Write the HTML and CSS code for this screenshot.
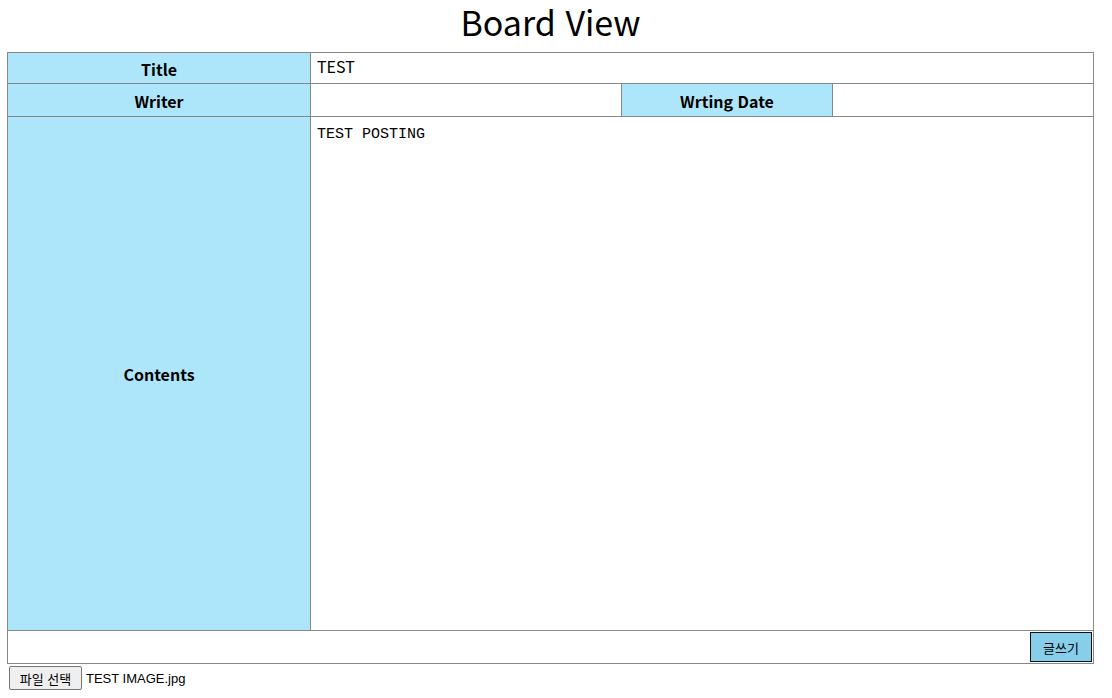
FILE: index.html
```html
<!DOCTYPE html>
<html lang="ko">
<head>
<meta charset="utf-8">
<title>Board View</title>
<link rel="stylesheet" href="styles.css">
</head>
<body>
<h1 class="page-title">Board View</h1>
<div class="board">
  <div class="cell label">Title</div>
  <div class="cell value span3 title-value">TEST</div>

  <div class="cell label">Writer</div>
  <div class="cell value"></div>
  <div class="cell label">Wrting Date</div>
  <div class="cell value"></div>

  <div class="cell label contents-label">Contents</div>
  <div class="cell value span3 contents-value">TEST POSTING</div>

  <div class="cell span4 actions"><button class="write-btn" type="button">글쓰기</button></div>
</div>
<div class="file-row">
  <button class="file-btn" type="button">파일 선택</button>
  <span class="file-name">TEST IMAGE.jpg</span>
</div>
</body>
</html>
```

FILE: styles.css
```css
html, body {
  margin: 0;
  padding: 0;
  background: #fff;
}
body {
  padding: 0 0 0 7px;
  font-family: "Noto Sans CJK KR", "Noto Sans", sans-serif;
  color: #000;
}
.page-title {
  margin: 0;
  height: 52px;
  width: 1087px;
  text-align: center;
  font-weight: 400;
  font-size: 34px;
  line-height: 44px;
  box-sizing: border-box;
}
.board {
  display: grid;
  width: 1087px;
  box-sizing: border-box;
  grid-template-columns: 303px 311px 211px 261px;
  grid-template-rows: 31px 33px 514px 33px;
  border-top: 1px solid #888;
  border-left: 1px solid #888;
}
.cell {
  border-right: 1px solid #888;
  border-bottom: 1px solid #888;
  box-sizing: border-box;
  font-size: 16px;
}
.label {
  background: #ade6fa;
  font-weight: 700;
  display: flex;
  align-items: center;
  justify-content: center;
  padding-top: 1px;
}
.span3 { grid-column: span 3; }
.span4 { grid-column: span 4; }
.title-value {
  padding: 3px 0 0 6px;
  line-height: 21px;
}
.contents-value {
  font-family: "Liberation Mono", "DejaVu Sans Mono", monospace;
  font-size: 15px;
  padding: 9px 0 0 6px;
  line-height: 18px;
}
.actions {
  display: flex;
  justify-content: flex-end;
  align-items: center;
  padding-right: 1px;
}
.write-btn {
  width: 62px;
  height: 30px;
  background: #87ceeb;
  border: 1px solid #111;
  font-family: "Noto Sans CJK KR", sans-serif;
  font-size: 13px;
  color: #000;
  padding: 0;
  margin: 0;
}
.file-row {
  display: flex;
  align-items: center;
  gap: 4px;
  padding: 2px 0 0 2px;
}
.file-btn {
  height: 24px;
  width: 73px;
  padding: 0;
  background: #efefef;
  border: 1px solid #767676;
  border-radius: 2px;
  font-family: "Noto Sans CJK KR", sans-serif;
  font-size: 13px;
  color: #000;
}
.file-name {
  font-family: "Liberation Sans", Arial, sans-serif;
  font-size: 13px;
}
```
